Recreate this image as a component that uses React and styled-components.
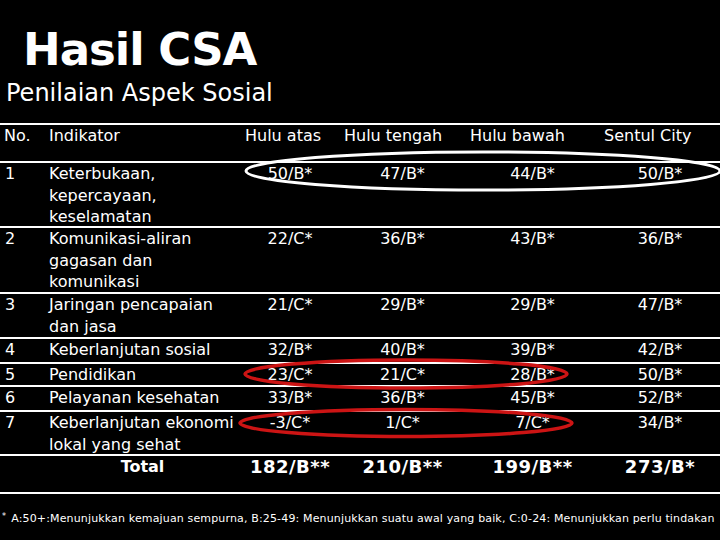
import React from 'react';
import styled, { createGlobalStyle } from 'styled-components';

const GlobalStyle = createGlobalStyle`
  html, body {
    margin: 0;
    padding: 0;
    background: #000;
  }
`;

const Slide = styled.div`
  position: relative;
  width: 720px;
  height: 540px;
  overflow: hidden;
  background: #000;
  color: #fff;
  font-family: "DejaVu Sans", Verdana, sans-serif;
  padding-top: 27px;
  box-sizing: border-box;
`;

const Title = styled.h1`
  margin: 0;
  padding-left: 23px;
  font-size: 45px;
  line-height: 46px;
  font-weight: bold;
  letter-spacing: -1px;
`;

const Subtitle = styled.h2`
  margin: 6px 0 0;
  padding-left: 6px;
  font-size: 24px;
  line-height: 28px;
  font-weight: normal;
`;

const Table = styled.div`
  margin-top: 16px;
  border-top: 2px solid #fff;
`;

const Row = styled.div`
  display: grid;
  grid-template-columns: 45px 195px 100px 125px 135px 120px;
  height: ${({ h }) => h}px;
  border-bottom: 2px solid #fff;
  font-size: 16px;
  line-height: 21.5px;
`;

const Cell = styled.div`
  padding-left: ${({ pad }) => pad ?? 0}px;
  text-align: ${({ center }) => (center ? 'center' : 'left')};
  white-space: nowrap;
`;

const TotalLabel = styled(Cell)`
  font-weight: bold;
  font-size: 16px;
`;

const TotalValue = styled(Cell)`
  font-weight: bold;
  font-size: 18px;
  letter-spacing: 0.5px;
`;

const Footnote = styled.p`
  margin: 15px 0 0;
  padding-left: 2px;
  font-size: 11px;
  line-height: 16px;
  letter-spacing: 0.15px;
  white-space: nowrap;
`;

const Mark = styled.sup`
  font-size: 8px;
  margin-right: 5px;
  vertical-align: 3px;
`;

const Overlay = styled.svg`
  position: absolute;
  left: 0;
  top: 0;
  pointer-events: none;
`;

const headPads = [4, 4, 5, 4, 5, 4];

const rows = [
  { no: '1', lines: ['Keterbukaan,', 'kepercayaan,', 'keselamatan'], v: ['50/B*', '47/B*', '44/B*', '50/B*'], h: 63 },
  { no: '2', lines: ['Komunikasi-aliran', 'gagasan dan', 'komunikasi'], v: ['22/C*', '36/B*', '43/B*', '36/B*'], h: 64 },
  { no: '3', lines: ['Jaringan pencapaian', 'dan jasa'], v: ['21/C*', '29/B*', '29/B*', '47/B*'], h: 43 },
  { no: '4', lines: ['Keberlanjutan sosial'], v: ['32/B*', '40/B*', '39/B*', '42/B*'], h: 23 },
  { no: '5', lines: ['Pendidikan'], v: ['23/C*', '21/C*', '28/B*', '50/B*'], h: 21 },
  { no: '6', lines: ['Pelayanan kesehatan'], v: ['33/B*', '36/B*', '45/B*', '52/B*'], h: 23 },
  { no: '7', lines: ['Keberlanjutan ekonomi', 'lokal yang sehat'], v: ['-3/C*', '1/C*', '7/C*', '34/B*'], h: 42 },
];

const totals = ['182/B**', '210/B**', '199/B**', '273/B*'];

export default function App() {
  return (
    <>
      <GlobalStyle />
      <Slide>
        <Title>Hasil CSA</Title>
        <Subtitle>Penilaian Aspek Sosial</Subtitle>
        <Table>
          <Row h={36}>
            {['No.', 'Indikator', 'Hulu atas', 'Hulu tengah', 'Hulu bawah', 'Sentul City'].map((t, i) => (
              <Cell key={t} pad={headPads[i]}>{t}</Cell>
            ))}
          </Row>
          {rows.map((r) => (
            <Row key={r.no} h={r.h}>
              <Cell pad={5}>{r.no}</Cell>
              <Cell pad={4}>
                {r.lines.map((l, i) => (
                  <div key={i}>{l}</div>
                ))}
              </Cell>
              {r.v.map((v, i) => (
                <Cell key={i} center>{v}</Cell>
              ))}
            </Row>
          ))}
          <Row h={36}>
            <Cell />
            <TotalLabel center>Total</TotalLabel>
            {totals.map((t, i) => (
              <TotalValue key={i} center>{t}</TotalValue>
            ))}
          </Row>
        </Table>
        <Footnote>
          <Mark>*</Mark>
          A:50+:Menunjukkan kemajuan sempurna, B:25-49: Menunjukkan suatu awal yang baik, C:0-24: Menunjukkan perlu tindakan
        </Footnote>
        <Overlay width="720" height="540" viewBox="0 0 720 540">
          <ellipse cx="483" cy="171" rx="237" ry="19" fill="none" stroke="#fff" strokeWidth="3" />
          <ellipse cx="406" cy="374" rx="161" ry="14" fill="none" stroke="#cc1414" strokeWidth="3.5" />
          <ellipse cx="406" cy="423" rx="166" ry="13.5" fill="none" stroke="#cc1414" strokeWidth="3.5" />
        </Overlay>
      </Slide>
    </>
  );
}
